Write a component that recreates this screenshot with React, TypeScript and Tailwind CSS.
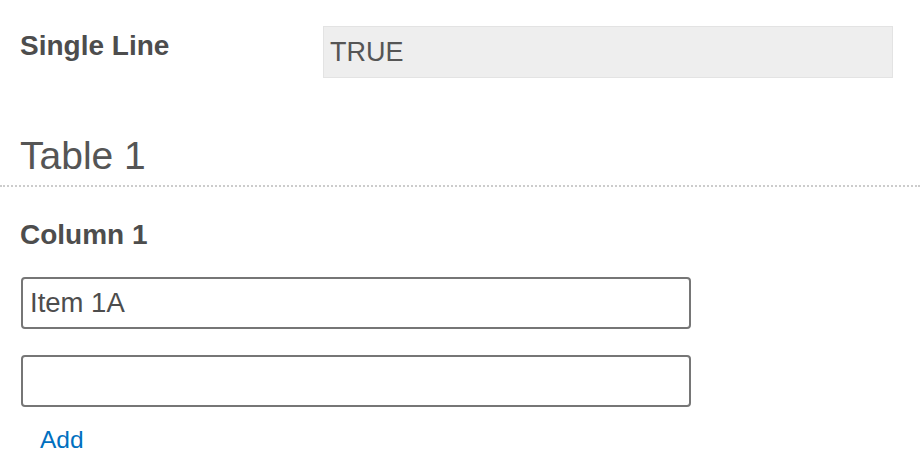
import React from "react";

export default function App() {
  return (
    <div
      className="w-[920px] h-[462px] overflow-hidden bg-white text-[#4d4d4d]"
      style={{ fontFamily: '"Liberation Sans", Arial, sans-serif' }}
    >
      <div className="flex pt-[26px]">
        <div className="ml-[20px] w-[303px] mt-[4px] text-[28px] leading-[31px] font-bold">
          Single Line
        </div>
        <div className="w-[570px] h-[52px] border border-[#e3e3e3] bg-[#eeeeee] px-[6px] flex items-center text-[27px] leading-[31px] text-[#555555]">
          TRUE
        </div>
      </div>

      <h2 className="mt-[56px] pl-[20px] pb-[8px] text-[39px] leading-[43px] font-normal text-[#555555] border-b-2 border-dotted border-[#cccccc]">
        Table 1
      </h2>

      <div className="mt-[32px] ml-[20px] text-[28px] leading-[31px] font-bold">
        Column 1
      </div>

      <div className="mt-[27px] ml-[21px] flex flex-col gap-[26px]">
        <input
          readOnly
          value="Item 1A"
          className="w-[670px] h-[52px] border-2 border-[#767676] rounded-[4px] px-[7px] text-[27.5px] text-[#4d4d4d] bg-white outline-none"
          style={{ fontFamily: '"Liberation Sans", Arial, sans-serif' }}
        />
        <input
          readOnly
          value=""
          className="w-[670px] h-[52px] border-2 border-[#767676] rounded-[4px] px-[7px] text-[27.5px] text-[#4d4d4d] bg-white outline-none"
          style={{ fontFamily: '"Liberation Sans", Arial, sans-serif' }}
        />
      </div>

      <div className="mt-[19px] ml-[40px] text-[24.5px] leading-[28px]">
        <a className="text-[#0070c0]">Add</a>
      </div>
    </div>
  );
}
